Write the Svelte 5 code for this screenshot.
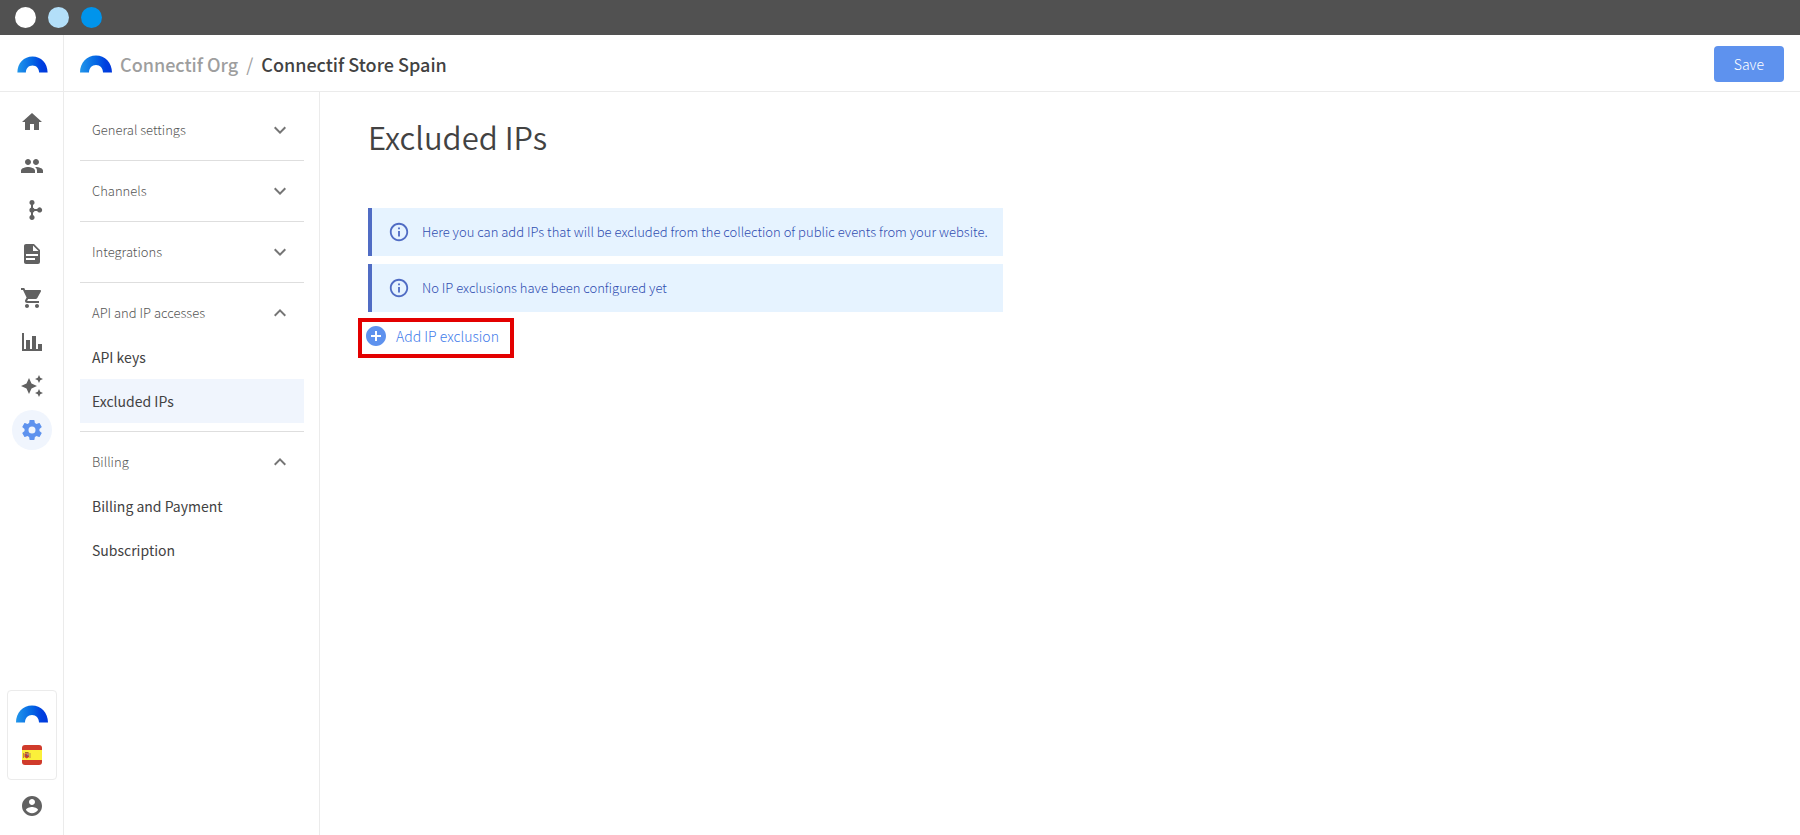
<script>
  const railItems = [
    { label: 'Home', d: 'M10 20v-6h4v6h5v-8h3L12 3 2 12h3v8z' },
    { label: 'Contacts', d: 'M16 11c1.66 0 2.99-1.34 2.99-3S17.66 5 16 5s-3 1.34-3 3 1.34 3 3 3zm-8 0c1.66 0 2.99-1.34 2.99-3S9.66 5 8 5 5 6.34 5 8s1.34 3 3 3zm0 2c-2.33 0-7 1.17-7 3.5V19h14v-2.500C15 14.170 10.330 13 8 13zm8 0c-.29 0-.62.02-.97.05 1.160.84 1.970 1.970 1.970 3.450V19h6v-2.500c0-2.330-4.670-3.500-7-3.500z' },
    { label: 'Workflows', d: 'M12 2a2.600 2.600 0 0 1 1 5v3.900h4.200a2.600 2.600 0 1 1 0 2.100H13v4a2.600 2.600 0 1 1-2 0V7a2.600 2.600 0 0 1 1-5zM12 9.400a2.600 2.600 0 1 1 0 5.200 2.600 2.600 0 0 1 0-5.200z' },
    { label: 'Content', d: 'M13 9h5.500L13 3.500V9M6 2h8l6 6v12a2 2 0 0 1-2 2H6c-1.110 0-2-.9-2-2V4c0-1.110.89-2 2-2m9 16v-2H6v2h9m3-4v-2H6v2h12z' },
    { label: 'Products', d: 'M7 18c-1.100 0-1.990.9-1.990 2S5.900 22 7 22s2-.9 2-2-.9-2-2-2zM1 2v2h2l3.600 7.590-1.350 2.450c-.16.28-.25.61-.25.96 0 1.100.9 2 2 2h12v-2H7.420c-.14 0-.25-.11-.25-.25l.03-.12.9-1.630h7.450c.75 0 1.410-.41 1.750-1.030l3.580-6.490c.08-.14.12-.31.12-.48 0-.55-.45-1-1-1H5.210l-.94-2H1zm16 16c-1.100 0-1.990.9-1.990 2s.89 2 1.990 2 2-.9 2-2-.9-2-2-2z' },
    { label: 'Reports', d: 'M22 21H2V3h2v16h2v-9h4v9h2V6h4v13h2v-5h4v7z' },
    { label: 'AI tools', d: 'M19 9l1.250-2.750L23 5l-2.750-1.250L19 1l-1.250 2.750L15 5l2.750 1.250L19 9zm-7.500.5L9 4 6.500 9.500 1 12l5.500 2.500L9 20l2.500-5.500L17 12l-5.500-2.500zM19 15l-1.250 2.750L15 19l2.750 1.250L19 23l1.250-2.750L23 19l-2.750-1.250L19 15z' },
    { label: 'Settings', active: true, d: 'M12 15.500A3.500 3.500 0 0 1 8.500 12 3.500 3.500 0 0 1 12 8.500a3.500 3.500 0 0 1 3.500 3.500 3.500 3.500 0 0 1-3.500 3.500m7.430-2.530c.04-.32.07-.64.07-.97 0-.33-.03-.66-.07-1l2.110-1.630c.19-.15.24-.42.12-.64l-2-3.460c-.12-.22-.39-.31-.61-.22l-2.490 1c-.52-.39-1.060-.73-1.690-.98l-.37-2.650A.506.506 0 0 0 14 2h-4c-.25 0-.46.18-.5.42l-.37 2.650c-.63.25-1.170.59-1.690.98l-2.490-1c-.22-.09-.49 0-.61.22l-2 3.460c-.13.22-.07.49.12.64L4.570 11c-.04.34-.07.67-.07 1 0 .33.03.65.07.97l-2.110 1.660c-.19.15-.25.42-.12.64l2 3.460c.12.22.39.3.61.22l2.490-1.010c.52.4 1.060.74 1.690.99l.37 2.650c.04.24.25.42.5.42h4c.25 0 .46-.18.5-.42l.37-2.650c.63-.26 1.170-.59 1.690-.99l2.490 1.010c.22.08.49 0 .61-.22l2-3.460c.12-.22.07-.49-.12-.64l-2.110-1.660z' }
  ];

  let groups = $state([
    { title: 'General settings', open: false, links: [] },
    { title: 'Channels', open: false, links: [] },
    { title: 'Integrations', open: false, links: [] },
    { title: 'API and IP accesses', open: true, links: ['API keys', 'Excluded IPs'] },
    { title: 'Billing', open: true, links: ['Billing and Payment', 'Subscription'] }
  ]);

  const current = 'Excluded IPs';

  const notices = [
    'Here you can add IPs that will be excluded from the collection of public events from your website.',
    'No IP exclusions have been configured yet'
  ];
</script>

{#snippet logo(id)}
  <svg class="logo" viewBox="0 0 32 18" aria-hidden="true">
    <defs>
      <linearGradient id={id} x1="0" y1="0" x2="1" y2="0">
        <stop offset="0" stop-color="#2196ea" />
        <stop offset="0.5" stop-color="#0466e4" />
        <stop offset="0.8" stop-color="#003fdf" />
        <stop offset="1" stop-color="#0038dc" />
      </linearGradient>
    </defs>
    <path fill="url(#{id})" d="M0 17.500C0 7.500 7 .5 16 .5s16 7 16 17h-9c0-4.500-3-7.500-7-7.500s-7 3-7 7.500z" />
  </svg>
{/snippet}

<div class="app">
  <div class="titlebar">
    <span class="dot white"></span>
    <span class="dot light"></span>
    <span class="dot blue"></span>
  </div>

  <div class="shell">
    <nav class="rail" aria-label="Main">
      <a class="brand small" href="#home" aria-label="Connectif">{@render logo('logo-rail')}</a>
      <div class="rail-items">
        {#each railItems as item}
          <a class="rail-item" class:active={item.active} href="#{item.label}" aria-label={item.label}>
            <svg viewBox="0 0 24 24" aria-hidden="true"><path d={item.d} /></svg>
          </a>
        {/each}
      </div>
      <button class="store" type="button" aria-label="Switch store">
        {@render logo('logo-store')}
        <svg class="flag" viewBox="0 0 20 20" aria-hidden="true">
          <defs><clipPath id="flag-clip"><rect width="20" height="20" rx="3" /></clipPath></defs>
          <g clip-path="url(#flag-clip)">
            <rect width="20" height="20" fill="#d03b2b" />
            <rect y="5" width="20" height="10" fill="#fbf03a" />
            <path d="M1 8h1v5H1zM7.500 8h1v5h-1z" fill="#b98a4a" />
            <path d="M2.500 8.500h4.500v3.500L4.800 13.500 2.500 12z" fill="#c9402f" />
            <path d="M3 7h3.500v1.300H3z" fill="#a8682c" />
            <path d="M4.800 8.500H7v2H4.800z" fill="#b5837c" />
            <path d="M4.300 10h1.200v1.300H4.300z" fill="#4a5a8c" />
          </g>
        </svg>
      </button>
      <a class="rail-item account" href="#account" aria-label="Account">
        <svg viewBox="0 0 24 24" aria-hidden="true"><path d="M12 2C6.480 2 2 6.480 2 12s4.480 10 10 10 10-4.480 10-10S17.520 2 12 2zm0 3c1.660 0 3 1.340 3 3s-1.340 3-3 3-3-1.340-3-3 1.340-3 3-3zm0 14.200c-2.500 0-4.710-1.280-6-3.220.03-1.990 4-3.080 6-3.080 1.990 0 5.970 1.090 6 3.080-1.290 1.940-3.500 3.220-6 3.220z" /></svg>
      </a>
    </nav>

    <div class="page">
      <header>
        {@render logo('logo-header')}
        <div class="crumbs">
          <a href="#org">Connectif Org</a>
          <span class="slash">/</span>
          <strong>Connectif Store Spain</strong>
        </div>
        <button class="save" type="button">Save</button>
      </header>

      <div class="body">
        <aside>
          {#each groups as group}
            <section>
              <button class="group" type="button" aria-expanded={group.open} onclick={() => (group.open = !group.open)}>
                {group.title}
                <svg viewBox="0 0 24 24" aria-hidden="true">
                  <path d={group.open ? 'M7.410 15.410 12 10.830l4.590 4.580L18 14l-6-6-6 6z' : 'M7.410 8.590 12 13.170l4.590-4.580L18 10l-6 6-6-6z'} />
                </svg>
              </button>
              {#if group.open}
                {#each group.links as link}
                  <a class="link" class:current={link === current} href="#{link}">{link}</a>
                {/each}
              {/if}
            </section>
          {/each}
        </aside>

        <main>
          <h1>Excluded IPs</h1>
          <div class="notices">
            {#each notices as text}
              <p class="notice">
                <svg viewBox="0 0 24 24" aria-hidden="true"><path d="M11 7h2v2h-2zm0 4h2v6h-2zm1-9C6.480 2 2 6.480 2 12s4.480 10 10 10 10-4.480 10-10S17.520 2 12 2zm0 18c-4.410 0-8-3.590-8-8s3.590-8 8-8 8 3.590 8 8-3.590 8-8 8z" /></svg>
                {text}
              </p>
            {/each}
          </div>
          <button class="add" type="button">
            <svg viewBox="0 0 24 24" aria-hidden="true"><path d="M12 2C6.480 2 2 6.480 2 12s4.480 10 10 10 10-4.480 10-10S17.520 2 12 2zm5 11h-4v4h-2v-4H7v-2h4V7h2v4h4v2z" /></svg>
            Add IP exclusion
            <span class="highlight"></span>
          </button>
        </main>
      </div>
    </div>
  </div>
</div>

<style>
  :global(body) {
    margin: 0;
    background: #fff;
  }

  .app {
    display: flex;
    flex-direction: column;
    min-height: 100vh;
    font-family: 'Noto Sans CJK SC', 'Noto Sans', sans-serif;
    font-size: 14px;
    line-height: 20px;
    color: #424242;
  }

  .app * {
    box-sizing: border-box;
  }

  a {
    color: inherit;
    text-decoration: none;
  }

  button {
    border: 0;
    padding: 0;
    background: none;
    font: inherit;
    color: inherit;
    cursor: pointer;
  }

  svg {
    display: block;
    flex: none;
    width: 24px;
    height: 24px;
    fill: currentColor;
  }

  .titlebar {
    display: flex;
    align-items: center;
    gap: 12px;
    height: 35px;
    padding: 0 15px 1px;
    background: #515151;
  }

  .dot {
    width: 21px;
    height: 21px;
    border-radius: 50%;
  }

  .white { background: #fff; }
  .light { background: #b3dff9; }
  .blue { background: #0094ec; }

  .shell,
  .body {
    display: flex;
    flex: 1;
  }

  .rail {
    display: flex;
    flex-direction: column;
    align-items: center;
    width: 64px;
    border-right: 1px solid #ebebeb;
    color: #616161;
  }

  .brand {
    display: flex;
    align-items: center;
    justify-content: center;
    align-self: stretch;
    height: 57px;
    padding: 2px 0 0 2px;
    border-bottom: 1px solid #ebebeb;
  }

  .logo {
    width: 32px;
    height: 18px;
  }

  .small .logo {
    width: 31px;
    height: 17px;
  }

  .rail-items {
    display: flex;
    flex: 1;
    flex-direction: column;
    gap: 4px;
    padding: 10px 0;
  }

  .rail-item {
    display: flex;
    align-items: center;
    justify-content: center;
    width: 40px;
    height: 40px;
    border-radius: 50%;
  }

  .rail-item.active {
    background: #f0f5fd;
    color: #5e92ee;
  }

  .store {
    display: flex;
    flex-direction: column;
    align-items: center;
    gap: 22px;
    width: 50px;
    padding: 14px 0;
    border: 1px solid #ebebeb;
    border-radius: 4px;
  }

  .flag {
    width: 20px;
    height: 20px;
  }

  .account {
    margin: 6px 0 9px;
  }

  .page {
    display: flex;
    flex: 1;
    flex-direction: column;
    min-width: 0;
  }

  header {
    display: flex;
    align-items: center;
    gap: 8px;
    height: 57px;
    padding: 1px 16px 0;
    border-bottom: 1px solid #ebebeb;
  }

  .crumbs {
    display: flex;
    flex: 1;
    gap: 8px;
    font-size: 18px;
    font-weight: 500;
    line-height: 24px;
    color: #9e9e9e;
  }

  .crumbs strong {
    font-weight: 500;
    color: #424242;
  }

  .slash {
    font-weight: 400;
  }

  .save {
    height: 36px;
    padding: 0 20px;
    border-radius: 4px;
    background: #5e92ee;
    font-weight: 300;
    color: #fff;
  }

  aside {
    width: 256px;
    padding: 8px 15px 8px 16px;
    border-right: 1px solid #ebebeb;
  }

  section {
    padding: 8px 0;
    border-bottom: 1px solid #dedede;
  }

  section:last-child {
    border-bottom: 0;
  }

  .group {
    display: flex;
    align-items: center;
    justify-content: space-between;
    width: 100%;
    height: 44px;
    padding: 0 12px;
    font-size: 13px;
    font-weight: 300;
    color: #555;
  }

  .group svg {
    color: #757575;
  }

  .link {
    display: flex;
    align-items: center;
    height: 44px;
    padding: 0 12px;
  }

  .current {
    background: #f0f5fd;
  }

  main {
    flex: 1;
    padding: 21px 48px;
  }

  h1 {
    margin: 0 0 47px;
    font-size: 31px;
    font-weight: 350;
    line-height: 48px;
  }

  .notices {
    display: flex;
    flex-direction: column;
    gap: 8px;
    width: fit-content;
  }

  .notice {
    display: flex;
    align-items: center;
    gap: 12px;
    min-height: 48px;
    margin: 0;
    padding: 0 15px 0 16px;
    border-left: 4px solid #506cc4;
    background: #e6f3ff;
    font-size: 13px;
    font-weight: 300;
    color: #2f4db0;
  }

  .notice svg {
    width: 22px;
    height: 22px;
    color: #506cc4;
  }

  .add {
    position: relative;
    display: flex;
    align-items: center;
    gap: 8px;
    height: 36px;
    margin: 6px 0 0 -4px;
    font-weight: 300;
    color: #3f7cea;
  }

  .add svg {
    color: #5e92ee;
  }

  .highlight {
    position: absolute;
    inset: 0 -15px -4px -6px;
    border: 4px solid #e30000;
    pointer-events: none;
  }
</style>
